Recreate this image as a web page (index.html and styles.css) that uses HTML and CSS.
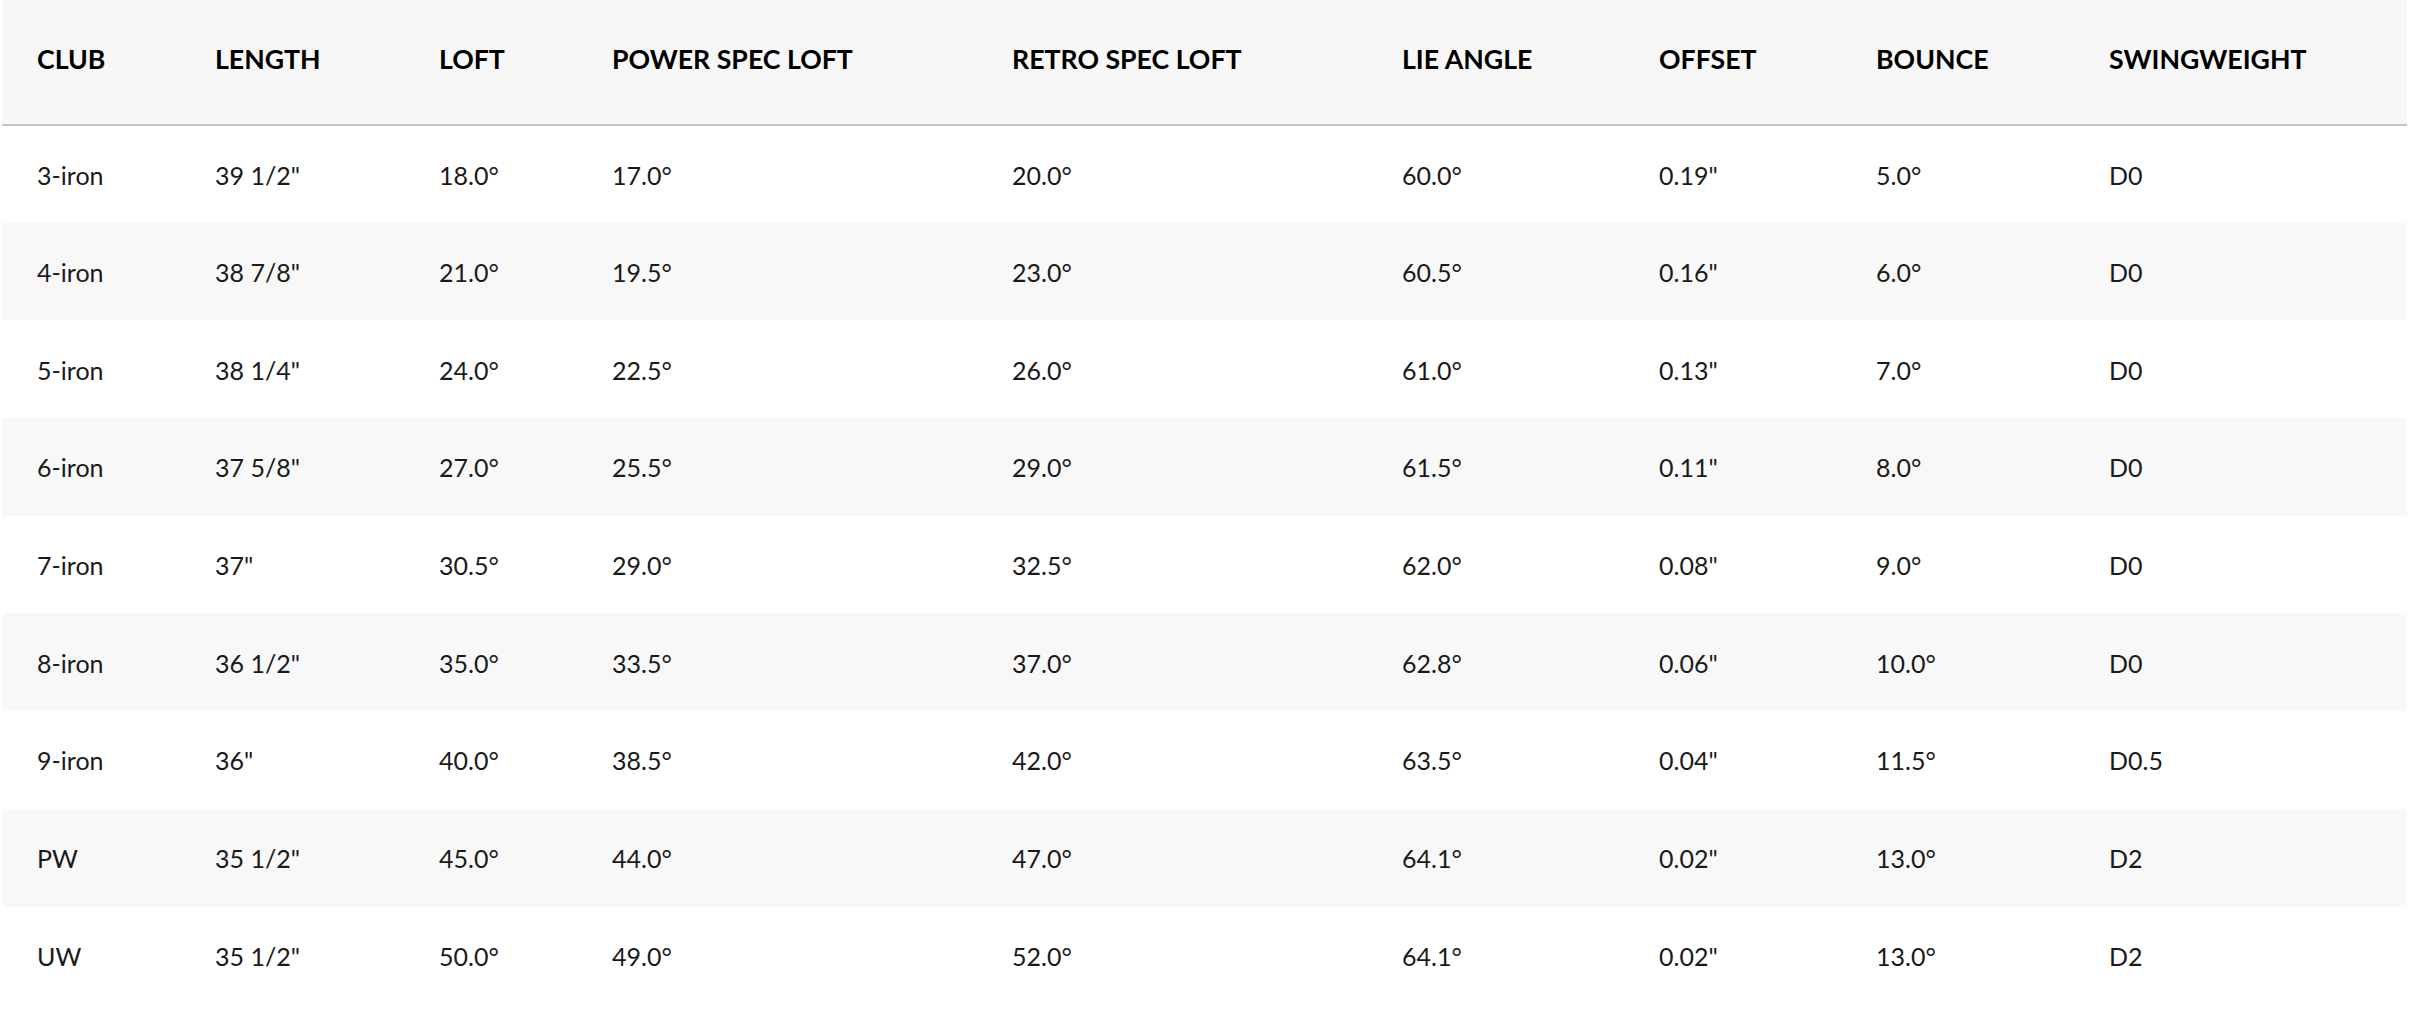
FILE: index.html
```html
<!DOCTYPE html>
<html lang="en">
<head>
<meta charset="utf-8">
<title>Iron Specs</title>
<link rel="stylesheet" href="styles.css">
</head>
<body>
<div class="wrap">
<table class="specs">
<colgroup>
<col class="c1"><col class="c2"><col class="c3"><col class="c4"><col class="c5"><col class="c6"><col class="c7"><col class="c8"><col class="c9">
</colgroup>
<thead>
<tr><th>CLUB</th><th>LENGTH</th><th>LOFT</th><th>POWER SPEC LOFT</th><th>RETRO SPEC LOFT</th><th>LIE ANGLE</th><th>OFFSET</th><th>BOUNCE</th><th>SWINGWEIGHT</th></tr>
</thead>
<tbody>
<tr><td>3-iron</td><td>39 1/2"</td><td>18.0°</td><td>17.0°</td><td>20.0°</td><td>60.0°</td><td>0.19"</td><td>5.0°</td><td>D0</td></tr>
<tr><td>4-iron</td><td>38 7/8"</td><td>21.0°</td><td>19.5°</td><td>23.0°</td><td>60.5°</td><td>0.16"</td><td>6.0°</td><td>D0</td></tr>
<tr><td>5-iron</td><td>38 1/4"</td><td>24.0°</td><td>22.5°</td><td>26.0°</td><td>61.0°</td><td>0.13"</td><td>7.0°</td><td>D0</td></tr>
<tr><td>6-iron</td><td>37 5/8"</td><td>27.0°</td><td>25.5°</td><td>29.0°</td><td>61.5°</td><td>0.11"</td><td>8.0°</td><td>D0</td></tr>
<tr><td>7-iron</td><td>37"</td><td>30.5°</td><td>29.0°</td><td>32.5°</td><td>62.0°</td><td>0.08"</td><td>9.0°</td><td>D0</td></tr>
<tr><td>8-iron</td><td>36 1/2"</td><td>35.0°</td><td>33.5°</td><td>37.0°</td><td>62.8°</td><td>0.06"</td><td>10.0°</td><td>D0</td></tr>
<tr><td>9-iron</td><td>36"</td><td>40.0°</td><td>38.5°</td><td>42.0°</td><td>63.5°</td><td>0.04"</td><td>11.5°</td><td>D0.5</td></tr>
<tr><td>PW</td><td>35 1/2"</td><td>45.0°</td><td>44.0°</td><td>47.0°</td><td>64.1°</td><td>0.02"</td><td>13.0°</td><td>D2</td></tr>
<tr><td>UW</td><td>35 1/2"</td><td>50.0°</td><td>49.0°</td><td>52.0°</td><td>64.1°</td><td>0.02"</td><td>13.0°</td><td>D2</td></tr>
</tbody>
</table>
</div>
</body>
</html>
```

FILE: styles.css
```css
html, body {
  margin: 0;
  padding: 0;
  background: #ffffff;
}
body {
  font-family: Lato, "Liberation Sans", sans-serif;
  color: #1a1a1a;
}
.wrap {
  padding: 0 2px;
}
.specs {
  width: 100%;
  table-layout: fixed;
  border-collapse: collapse;
}
.c1 { width: 178px; }
.c2 { width: 224px; }
.c3 { width: 173px; }
.c4 { width: 400px; }
.c5 { width: 390px; }
.c6 { width: 257px; }
.c7 { width: 217px; }
.c8 { width: 233px; }
.c9 { width: auto; }
.specs th {
  background: #f7f7f7;
  height: 125px;
  padding: 0 0 6px 35px;
  box-sizing: border-box;
  text-align: left;
  font-weight: 700;
  font-size: 26.7px;
  color: #000;
  border-bottom: 2px solid #c4c4c4;
  white-space: nowrap;
}
.specs td {
  height: 97.7px;
  padding: 1px 0 0 35px;
  box-sizing: border-box;
  font-size: 25px;
  font-weight: 400;
  color: #1a1a1a;
  white-space: nowrap;
}
.specs tbody tr:nth-child(even) td {
  background: #f8f8f8;
}
```
